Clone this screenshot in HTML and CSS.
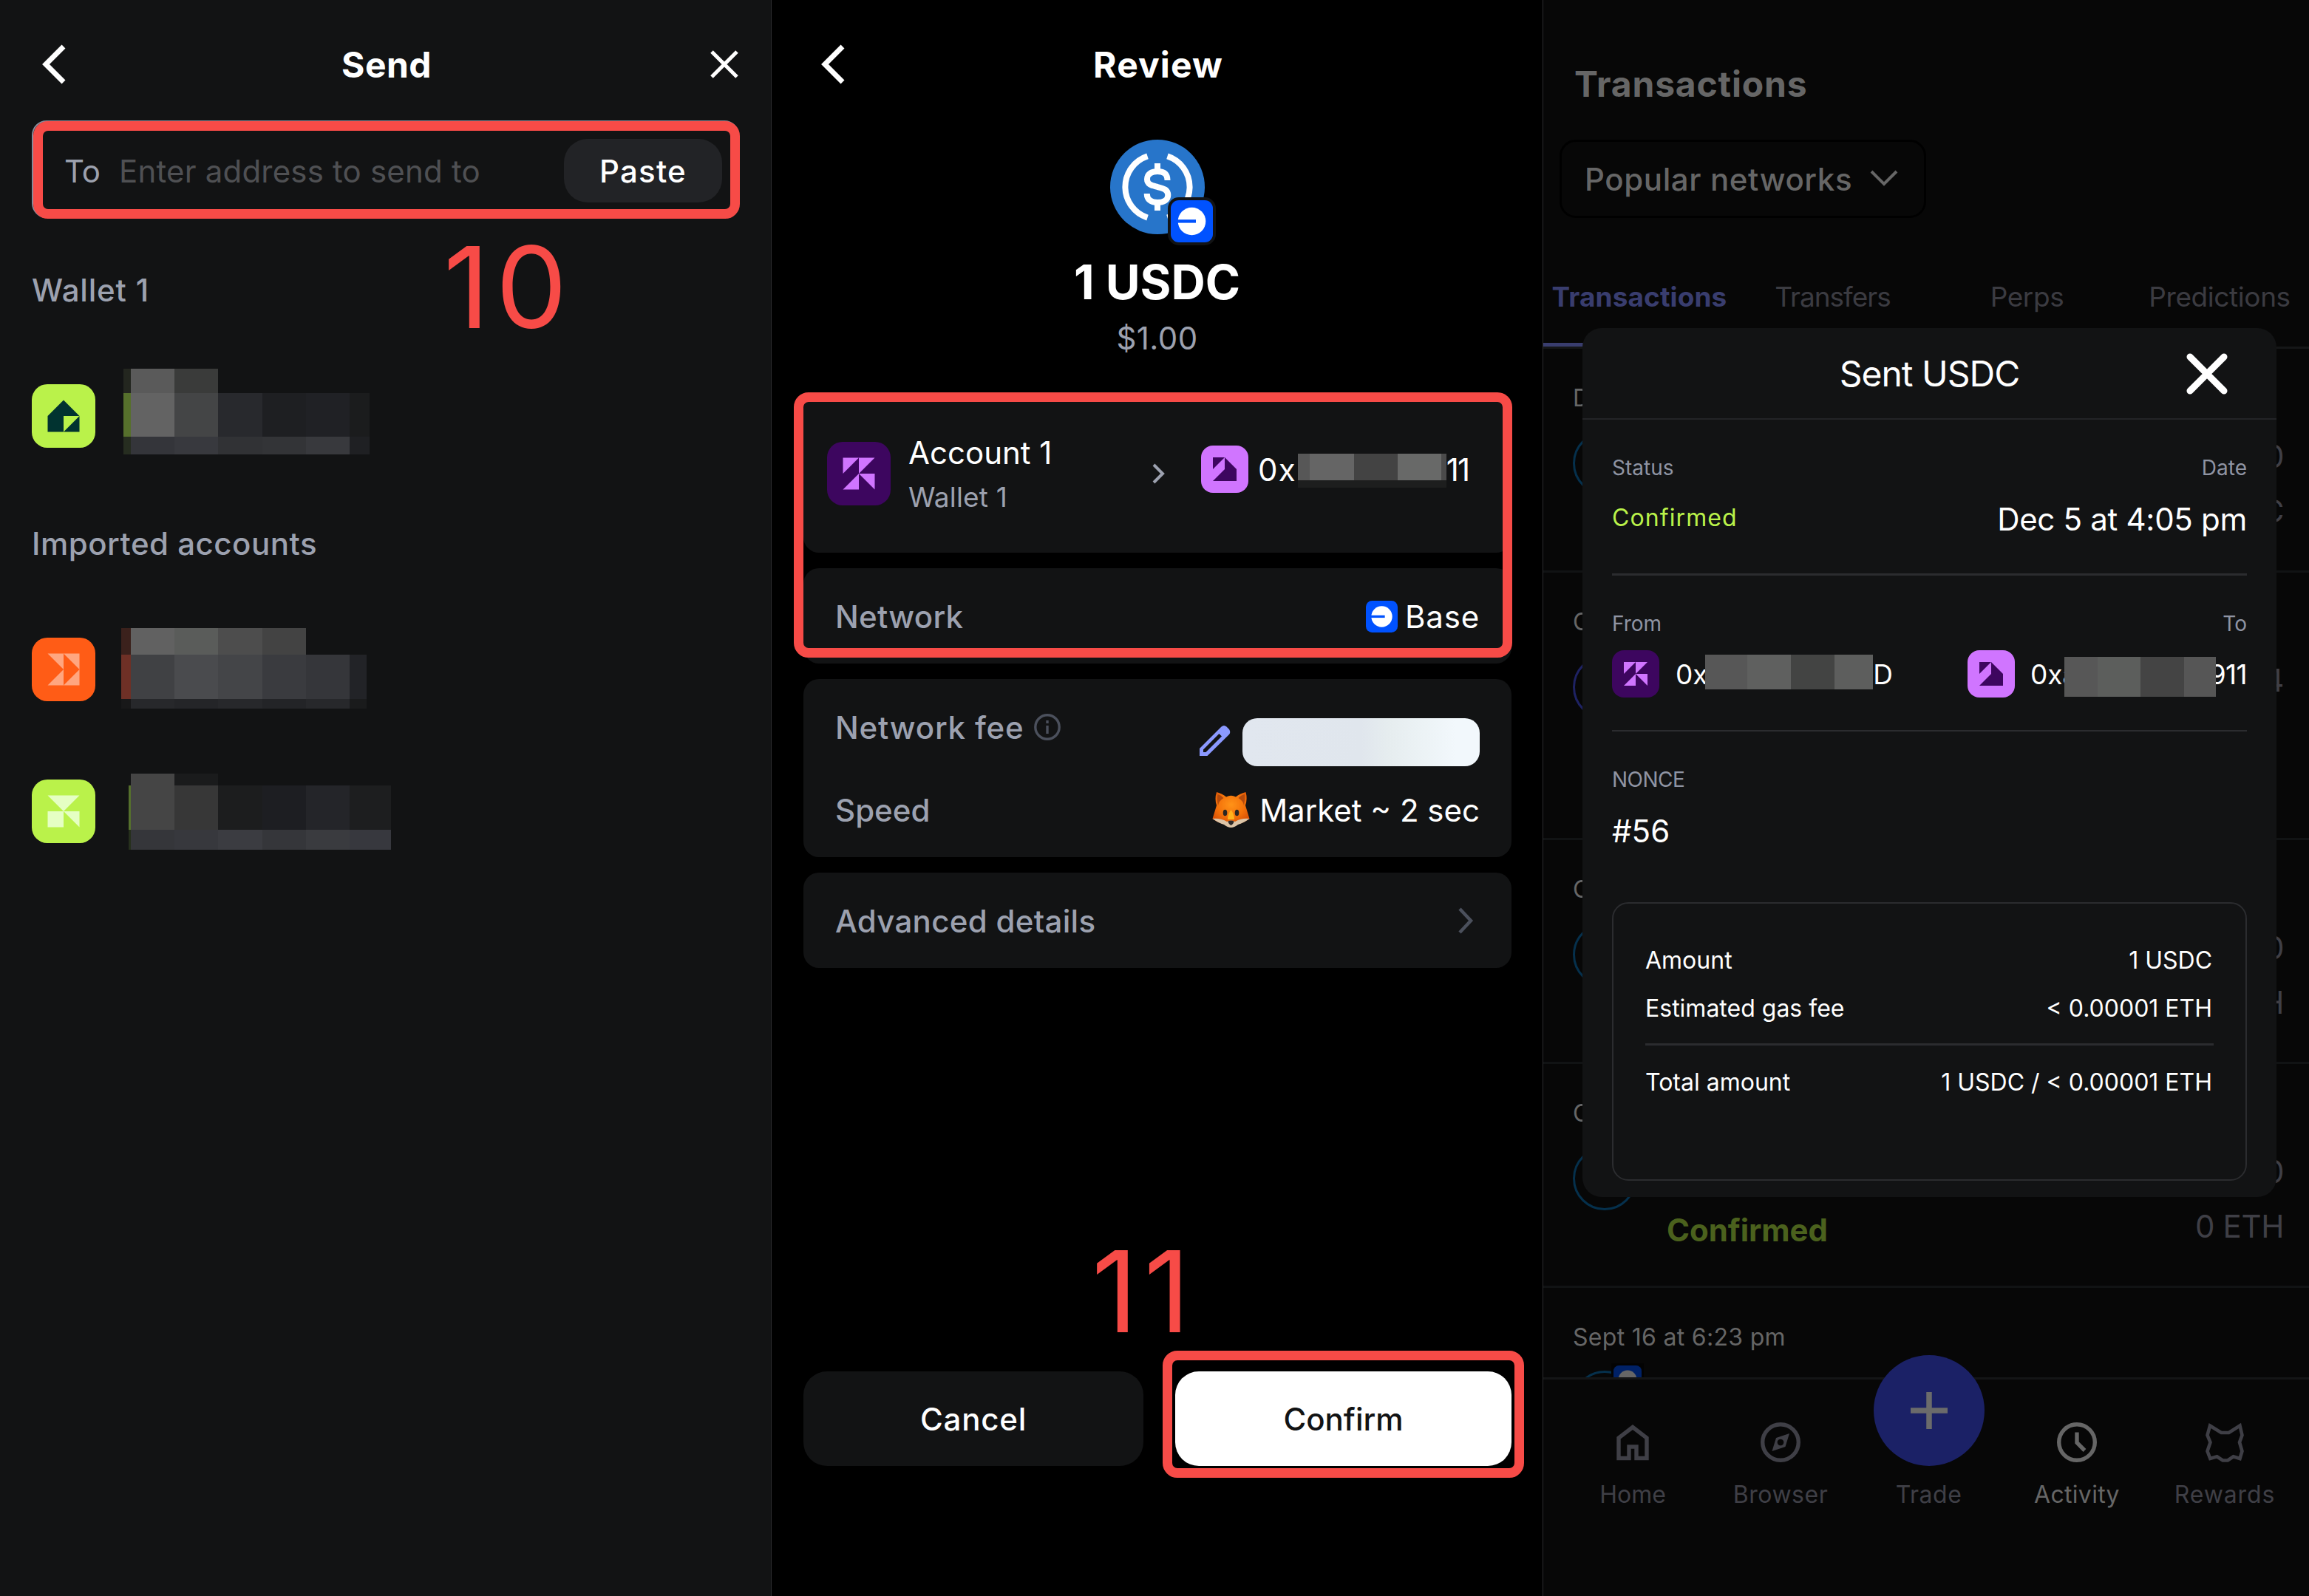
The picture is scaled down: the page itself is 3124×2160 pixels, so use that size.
FILE: index.html
```html
<!DOCTYPE html>
<html lang="en">
<head>
  <meta charset="UTF-8">
  <meta name="viewport" content="width=device-width, initial-scale=1.0">
  <title>Send USDC</title>
  <link rel="stylesheet" href="styles.css">
</head>
<body>
  <svg class="defs" width="0" height="0">
    <symbol id="avatar-k" viewBox="0 0 8 8"><path d="M2 2h2L2 4z M4 2h2L4 4z M4 4v2H2z M4 4h2v2z"/></symbol>
    <symbol id="avatar-tile" viewBox="0 0 8 8"><path d="M2 2h2L2 4z M4 2l2 2v2H2l2-2z"/></symbol>
    <symbol id="avatar-house" viewBox="0 0 8 8"><path d="M4 2L2 4v2h2V4h2z M4 6h2V4z"/></symbol>
    <symbol id="avatar-arrows" viewBox="0 0 8 8"><path d="M2 2h2v2z M4 2h2v2z M4 4v2H2z M6 4v2H4z"/></symbol>
    <symbol id="avatar-mix" viewBox="0 0 8 8"><path d="M2 2h4L4 4z M2 4h2v2H2z M4 4h2v2z"/></symbol>
    <symbol id="base-logo" viewBox="0 0 57 57">
      <rect width="57" height="57" rx="11" fill="#0052ff"/>
      <circle cx="28.5" cy="28.5" r="18.8" fill="#fff"/>
      <rect x="8" y="26.2" width="26" height="4.4" fill="#0052ff"/>
    </symbol>
  </svg>

  <div class="screens">

    <!-- Send -->
    <section class="screen send">
      <header class="topbar">
        <svg class="back" width="32" height="54" viewBox="0 0 32 54"><path d="M29 3L5 27l24 24"/></svg>
        <h1>Send</h1>
        <svg class="close" width="38" height="38" viewBox="0 0 38 38"><path d="M2 2l34 34M36 2L2 36"/></svg>
      </header>

      <div class="to-field">
        <span class="to-label">To</span>
        <span class="placeholder">Enter address to send to</span>
        <button class="paste">Paste</button>
        <div class="mark mark-field"></div>
      </div>

      <h2 class="group-title first">Wallet 1</h2>
      <div class="account-row row-a">
        <svg class="avatar lime" viewBox="0 0 8 8"><use href="#avatar-house"/></svg>
        <svg class="mosaic" width="333" height="116">
          <rect x="0" y="0" width="10" height="33" fill="#23261f"/>
          <rect x="10" y="0" width="59" height="33" fill="#5a5a5a"/>
          <rect x="69" y="0" width="59" height="33" fill="#3a3b3a"/>
          <rect x="0" y="33" width="10" height="59" fill="#56702c"/>
          <rect x="10" y="33" width="59" height="59" fill="#636363"/>
          <rect x="69" y="33" width="59" height="59" fill="#444546"/>
          <rect x="128" y="33" width="60" height="59" fill="#28292d"/>
          <rect x="188" y="33" width="59" height="59" fill="#1e1f22"/>
          <rect x="247" y="33" width="59" height="59" fill="#202125"/>
          <rect x="306" y="33" width="27" height="59" fill="#1b1c1d"/>
          <rect x="0" y="92" width="10" height="24" fill="#262d20"/>
          <rect x="10" y="92" width="59" height="24" fill="#34353a"/>
          <rect x="69" y="92" width="59" height="24" fill="#38393e"/>
          <rect x="128" y="92" width="60" height="24" fill="#313235"/>
          <rect x="188" y="92" width="59" height="24" fill="#333437"/>
          <rect x="247" y="92" width="59" height="24" fill="#38393d"/>
          <rect x="306" y="92" width="27" height="24" fill="#1f2023"/>
        </svg>
      </div>

      <h2 class="group-title imported">Imported accounts</h2>
      <div class="account-row row-b">
        <svg class="avatar orange" viewBox="0 0 8 8"><use href="#avatar-arrows"/></svg>
        <svg class="mosaic" width="332" height="109">
          <rect x="0" y="0" width="13" height="36" fill="#3b211c"/>
          <rect x="13" y="0" width="59" height="36" fill="#616161"/>
          <rect x="72" y="0" width="59" height="36" fill="#5a5c5a"/>
          <rect x="131" y="0" width="60" height="36" fill="#4d4d4d"/>
          <rect x="191" y="0" width="59" height="36" fill="#434343"/>
          <rect x="0" y="36" width="13" height="60" fill="#6e3026"/>
          <rect x="13" y="36" width="59" height="60" fill="#404144"/>
          <rect x="72" y="36" width="59" height="60" fill="#4a4b4e"/>
          <rect x="131" y="36" width="60" height="60" fill="#444548"/>
          <rect x="191" y="36" width="59" height="60" fill="#3a3b3f"/>
          <rect x="250" y="36" width="59" height="60" fill="#35363a"/>
          <rect x="309" y="36" width="23" height="60" fill="#222327"/>
          <rect x="0" y="96" width="13" height="13" fill="#181819"/>
          <rect x="13" y="96" width="59" height="13" fill="#27282b"/>
          <rect x="72" y="96" width="59" height="13" fill="#242528"/>
          <rect x="131" y="96" width="60" height="13" fill="#27282b"/>
          <rect x="191" y="96" width="59" height="13" fill="#232427"/>
          <rect x="250" y="96" width="59" height="13" fill="#27282b"/>
          <rect x="309" y="96" width="23" height="13" fill="#1a1b1c"/>
        </svg>
      </div>
      <div class="account-row row-c">
        <svg class="avatar lime-light" viewBox="0 0 8 8"><use href="#avatar-mix"/></svg>
        <svg class="mosaic" width="355" height="103">
          <rect x="3" y="0" width="59" height="76" fill="#454545"/>
          <rect x="62" y="0" width="59" height="16" fill="#1a1b1c"/>
          <rect x="0" y="16" width="3" height="60" fill="#55702c"/>
          <rect x="62" y="16" width="59" height="60" fill="#373737"/>
          <rect x="121" y="16" width="60" height="60" fill="#1c1d1e"/>
          <rect x="181" y="16" width="59" height="60" fill="#1d1e22"/>
          <rect x="240" y="16" width="59" height="60" fill="#242529"/>
          <rect x="299" y="16" width="56" height="60" fill="#1d1e1f"/>
          <rect x="0" y="76" width="3" height="27" fill="#26301c"/>
          <rect x="3" y="76" width="59" height="27" fill="#35363a"/>
          <rect x="62" y="76" width="59" height="27" fill="#37383d"/>
          <rect x="121" y="76" width="60" height="27" fill="#3b3c41"/>
          <rect x="181" y="76" width="59" height="27" fill="#35363a"/>
          <rect x="240" y="76" width="59" height="27" fill="#3a3b3f"/>
          <rect x="299" y="76" width="56" height="27" fill="#37383e"/>
        </svg>
      </div>
      <div class="step step-10">10</div>
    </section>

    <!-- Review -->
    <section class="screen review">
      <header class="topbar">
        <svg class="back" width="32" height="54" viewBox="0 0 32 54"><path d="M29 3L5 27l24 24"/></svg>
        <h1>Review</h1>
      </header>

      <div class="token">
        <svg width="128" height="128" viewBox="-64 -64 128 128">
          <circle r="64" fill="#2775ca"/>
          <g fill="none" stroke="#fff" stroke-width="8">
            <path d="M-13.5 -41.6A43.8 43.8 0 0 0 -13.5 41.6M13.5 -41.6A43.8 43.8 0 0 1 13.5 41.6"/>
            <path d="M13.5 -9C13.5 -18 8 -21 0 -21C-9 -21 -14 -17 -14 -10.5C-14 -3 -7 -2 0 0C8 2 14.3 3.5 14.3 11C14.3 18 8 21 0 21C-9 21 -14.3 17 -14.3 9M0 -32v11M0 21v11"/>
          </g>
        </svg>
        <svg class="token-badge" width="65" height="65"><use href="#base-logo" x="4" y="4" width="57" height="57"/></svg>
      </div>
      <div class="amount">1 USDC</div>
      <div class="fiat">$1.00</div>

      <div class="cards">
        <div class="card transfer">
          <svg class="avatar purple" viewBox="0 0 8 8"><use href="#avatar-k"/></svg>
          <div class="from">
            <div class="from-name">Account 1</div>
            <div class="from-wallet">Wallet 1</div>
          </div>
          <svg class="arrow" width="18" height="30" viewBox="0 0 18 30"><path d="M3 3l12 12L3 27"/></svg>
          <svg class="avatar small violet" viewBox="0 0 8 8"><use href="#avatar-tile"/></svg>
          <div class="address review-to">
            <span>0x</span>
            <span>11</span>
            <svg class="mask" width="201" height="46">
              <rect width="16" height="36" fill="#575757"/>
              <rect x="16" width="60" height="36" fill="#656565"/>
              <rect x="76" width="59" height="36" fill="#434343"/>
              <rect x="135" width="59" height="36" fill="#686968"/>
              <rect x="194" width="7" height="36" fill="#4b4b4b"/>
              <rect y="36" width="201" height="10" fill="#1d1e1e"/>
            </svg>
          </div>
        </div>

        <div class="card line">
          <span class="label">Network</span>
          <span class="value network"><svg width="43" height="43"><use href="#base-logo" width="43" height="43"/></svg>Base</span>
        </div>

        <div class="card fees">
          <div class="fee-row">
            <span class="label fee-label">Network fee
              <svg width="36" height="36" viewBox="0 0 36 36"><circle cx="18" cy="18" r="16.2"/><path d="M18 16v11M18 9v4"/></svg>
            </span>
            <span class="fee-value">
              <svg width="42" height="42" viewBox="0 0 42 42"><path fill-rule="evenodd" d="M0 41V31L29.5 1.5Q33 -1.5 36.5 1.5L40 5Q42.5 9 40 12L10.5 41ZM5 36V32.5L26.4 11L30 14.5L8.5 36Z"/></svg>
              <span class="skeleton"></span>
            </span>
          </div>
          <div class="speed-row">
            <span class="label speed">Speed</span>
            <span class="value market">
              <svg width="51" height="49" viewBox="0 0 51 49">
                <defs>
                  <radialGradient id="fur" cx=".5" cy=".38" r=".6">
                    <stop offset="0" stop-color="#ff9318"/>
                    <stop offset=".6" stop-color="#f4720a"/>
                    <stop offset="1" stop-color="#d95206"/>
                  </radialGradient>
                </defs>
                <path fill="url(#fur)" d="M6 0Q14 2 19 6.5Q25.5 3 32 6.5Q37 2 45.5 0Q48 9 45 18L50.5 36Q40 44 25.5 45Q11 44 0.5 36L6 18Q3 9 6 0Z"/>
                <path fill="#b34a0c" d="M7.5 3Q12 4 15.5 8Q9 12 8 18Q6 10 7.5 3ZM44 3Q39 4 35.5 8Q42 12 43 18Q45 10 44 3Z"/>
                <path fill="#ffb21c" d="M25.5 24Q30 30 30 37H21Q21 30 25.5 24Z"/>
                <path fill="#dcc5a8" d="M0.5 36Q11 35 20 40Q25.5 37 31 40Q40 35 50.5 36Q42 42 35 44Q30 48 25.5 48Q21 48 16 44Q9 42 0.5 36Z"/>
                <ellipse cx="17.5" cy="28" rx="2.8" ry="4.3" fill="#2b2623"/>
                <ellipse cx="33.5" cy="28" rx="2.8" ry="4.3" fill="#2b2623"/>
                <path fill="#2f2b29" d="M21.5 39.5Q25.5 37.5 29.5 39.5Q29 43 25.5 45Q22 43 21.5 39.5Z"/>
              </svg>Market ~ 2 sec</span>
          </div>
        </div>

        <div class="card line advanced">
          <span class="label">Advanced details</span>
          <svg width="22" height="36" viewBox="0 0 22 36"><path d="M3 2l15 16L3 34"/></svg>
        </div>
      </div>

      <div class="actions">
        <button class="cancel">Cancel</button>
        <button class="confirm">Confirm</button>
      </div>

      <div class="mark mark-transfer"></div>
      <div class="mark mark-confirm"></div>
      <div class="step step-11">11</div>
    </section>

    <!-- Activity -->
    <section class="screen activity">
      <h1 class="page-title">Transactions</h1>
      <div class="network-select">Popular networks
        <svg width="38" height="22" viewBox="0 0 38 22"><path d="M2 2l17 17L36 2"/></svg>
      </div>
      <nav class="tabs">
        <span class="tab active">Transactions</span>
        <span class="tab t-transfers">Transfers</span>
        <span class="tab">Perps</span>
        <span class="tab t-predictions">Predictions</span>
      </nav>

      <div class="list">
        <div class="item">
          <div class="date">D</div>
          <div class="item-body">
            <span class="ring"></span>
            <div class="totals"><span>0</span><span>C</span></div>
          </div>
        </div>
        <div class="item tall">
          <div class="date">O</div>
          <div class="item-body">
            <span class="ring indigo"></span>
            <div class="totals"><span>4</span></div>
          </div>
        </div>
        <div class="item">
          <div class="date">O</div>
          <div class="item-body">
            <span class="ring"></span>
            <div class="totals"><span>0</span><span>H</span></div>
          </div>
        </div>
        <div class="item">
          <div class="date">O</div>
          <div class="item-body">
            <span class="ring"></span>
            <div class="state">Confirmed</div>
            <div class="totals"><span>0</span><span>0 ETH</span></div>
          </div>
        </div>
        <div class="item">
          <div class="date">Sept 16 at 6:23 pm</div>
          <div class="item-body">
            <span class="ring"><svg width="44" height="44"><rect width="44" height="44" fill="#070707"/><use href="#base-logo" x="3" y="3" width="38" height="38"/></svg></span>
          </div>
        </div>
      </div>

      <nav class="bottom-nav">
        <div class="nav-item">
          <svg width="54" height="54" viewBox="0 0 54 54"><path d="M8 48.5V21L27 6.5L46 21v27.5H32V33H22v15.5z"/></svg>
          <span>Home</span>
        </div>
        <div class="nav-item browser">
          <svg width="54" height="54" viewBox="0 0 54 54"><circle cx="27" cy="27" r="24.3"/><path class="solid" fill-rule="evenodd" d="M39 15L33.5 33L15.5 39L21 21ZM27 22.7a4.3 4.3 0 1 0 .01 0z"/></svg>
          <span>Browser</span>
        </div>
        <div class="nav-item trade">
          <div class="trade-button"><svg width="50" height="50" viewBox="0 0 50 50"><path d="M25 0v50M0 25h50"/></svg></div>
          <span>Trade</span>
        </div>
        <div class="nav-item current">
          <svg width="54" height="54" viewBox="0 0 54 54"><circle cx="27" cy="27" r="24.3"/><path d="M27 13.5V27.5L37.5 38"/></svg>
          <span>Activity</span>
        </div>
        <div class="nav-item rewards">
          <svg width="54" height="54" viewBox="0 0 54 54"><path stroke-width="4.6" d="M7 4.5L22.3 14H32.5L47.5 4.5L50.5 17.3L47 27L50.5 39L47.5 49L38.7 46.3L31 51.5H24.3L16.5 46.3L7.3 49L3.5 39L7.5 27L3.5 17.3Z"/></svg>
          <span>Rewards</span>
        </div>
      </nav>

      <div class="modal">
        <header class="modal-head">
          <span></span>
          <h2>Sent USDC</h2>
          <svg width="56" height="56" viewBox="0 0 56 56"><path d="M5 5l46 46M51 5L5 51"/></svg>
        </header>
        <div class="modal-body">
          <div class="pair caption"><span>Status</span><span>Date</span></div>
          <div class="pair values">
            <span class="confirmed">Confirmed</span>
            <span class="when">Dec 5 at 4:05 pm</span>
          </div>
          <hr class="rule-1">
          <div class="pair caption"><span>From</span><span>To</span></div>
          <div class="pair parties">
            <div class="party">
              <svg class="avatar small purple" viewBox="0 0 8 8"><use href="#avatar-k"/></svg>
              <div class="address modal-from">
                <span>0x</span>
                <span>3D</span>
                <svg class="mask" width="227" height="47">
                  <rect width="57" height="47" fill="#575757"/>
                  <rect x="57" width="59" height="47" fill="#5f605f"/>
                  <rect x="116" width="59" height="47" fill="#434443"/>
                  <rect x="175" width="52" height="47" fill="#5d5e5d"/>
                </svg>
              </div>
            </div>
            <div class="party">
              <svg class="avatar small violet" viewBox="0 0 8 8"><use href="#avatar-tile"/></svg>
              <div class="address modal-to">
                <span>0xa</span>
                <span>911</span>
                <svg class="mask" width="205" height="54">
                  <rect width="45" height="54" fill="#575757"/>
                  <rect x="45" width="58" height="54" fill="#5c5e5c"/>
                  <rect x="103" width="59" height="54" fill="#444"/>
                  <rect x="162" width="43" height="54" fill="#565656"/>
                </svg>
              </div>
            </div>
          </div>
          <hr class="rule-2">
          <div class="pair caption nonce-label"><span>NONCE</span></div>
          <div class="nonce">#56</div>
          <div class="summary">
            <div class="pair"><span>Amount</span><span>1 USDC</span></div>
            <div class="pair gas"><span>Estimated gas fee</span><span>&lt; 0.00001 ETH</span></div>
            <hr>
            <div class="pair"><span>Total amount</span><span>1 USDC / &lt; 0.00001 ETH</span></div>
          </div>
        </div>
      </div>
    </section>
  </div>
</body>
</html>
```
FILE: styles.css
```css
* {
  box-sizing: border-box;
}
body {
  margin: 0;
  background-color: #000;
  color: #fff;
  font-family: Inter, "Liberation Sans", sans-serif;
  font-size: 42px;
}
svg {
  display: block;
  flex-shrink: 0;
}
.defs {
  display: none;
}
h1, h2 {
  margin: 0;
}
button {
  border: none;
  padding: 0;
  color: #fff;
  font-family: inherit;
  font-size: 42px;
  font-weight: 500;
}
hr {
  border: none;
  margin: 0;
  height: 3px;
  background-color: #2b2c2f;
}
.screens {
  display: flex;
  width: 3124px;
  height: 2160px;
}
.screen {
  position: relative;
  height: 2160px;
  overflow: hidden;
}
.send {
  width: 1044px;
  background-color: #121314;
  border-right: 1px solid #2c2c2e;
}
.review {
  width: 1044px;
  background-color: #000;
  border-right: 1px solid #2c2c2e;
}
.activity {
  width: 1036px;
  background-color: #070707;
}

/* top bar */
.topbar {
  display: grid;
  grid-template-columns: 1fr auto 1fr;
  align-items: center;
  height: 163px;
  padding: 11px 44px 0 57px;
}
.topbar h1 {
  grid-column: 2;
  padding-top: 1px;
  font-size: 48px;
  line-height: 60px;
  letter-spacing: 0.4px;
}
.topbar svg {
  fill: none;
  stroke: #fff;
}
.topbar .back {
  stroke-width: 7;
}
.topbar .close {
  justify-self: end;
  stroke-width: 5;
}
.send .topbar h1 {
  margin: 0 5px 0 -5px;
}
.review .topbar {
  padding: 11px 64px 0 67px;
}
.review .topbar h1 {
  letter-spacing: 1.1px;
}

/* red marks drawn over the screens */
.mark {
  position: absolute;
  border: 13px solid #f74b47;
  border-radius: 20px;
}
.mark-field {
  top: -1px;
  right: -3px;
  bottom: -3px;
  left: 0;
}
.mark-transfer {
  left: 30px;
  top: 531px;
  width: 972px;
  height: 359px;
}
.mark-confirm {
  left: 529px;
  top: 1828px;
  width: 489px;
  height: 172px;
}
.step {
  position: absolute;
  color: #f74b47;
  font-size: 153px;
  line-height: 160px;
  letter-spacing: 8.5px;
}
.step-10 {
  left: 600px;
  top: 309px;
}
.step-11 {
  left: 433px;
  top: 1668px;
}

/* send */
.to-field {
  position: relative;
  display: flex;
  align-items: center;
  height: 132px;
  margin: 0 43px;
  padding: 4px 21px 0 42px;
  border: 2px solid #858b9a;
  border-radius: 20px;
}
.to-label {
  width: 74px;
  color: #9ca1af;
}
.placeholder {
  flex: 1;
  color: #4f5053;
  letter-spacing: 0.2px;
}
.paste {
  width: 214px;
  height: 86px;
  border-radius: 32px;
  background-color: #222326;
  letter-spacing: 1.2px;
}
.group-title {
  margin-left: 43px;
  color: #9ca1af;
  font-size: 42px;
  font-weight: 500;
  line-height: 60px;
}
.group-title.first {
  margin-top: 68px;
  letter-spacing: 0.8px;
}
.group-title.imported {
  margin-top: 91px;
  letter-spacing: 0.5px;
}
.account-row {
  display: flex;
  align-items: flex-start;
  margin-left: 43px;
}
.row-a {
  margin-top: 76px;
  gap: 38px;
}
.row-a .avatar {
  margin-top: 21px;
}
.row-b {
  margin-top: 84px;
  gap: 35px;
}
.row-b .avatar {
  margin-top: 13px;
}
.row-c {
  margin-top: 88px;
  gap: 45px;
}
.row-c .avatar {
  margin-top: 8px;
}
.avatar {
  width: 86px;
  height: 86px;
  border-radius: 21px;
}
.avatar.small {
  width: 64px;
  height: 64px;
  border-radius: 16px;
}
.lime {
  background-color: #baf24a;
  fill: #013330;
}
.lime-light {
  background-color: #baf24a;
  fill: #e5ffc3;
}
.orange {
  background-color: #ff5c16;
  fill: #ffa680;
}
.purple {
  background-color: #3d065f;
  fill: #d075ff;
}
.violet {
  background-color: #d075ff;
  fill: #3d065f;
}

/* review */
.token {
  position: relative;
  width: 128px;
  margin: 26px auto 0;
}
.token-badge {
  position: absolute;
  left: 78px;
  top: 78px;
  border-radius: 15px;
  background-color: #121314;
}
.amount {
  margin-top: 25px;
  font-size: 64px;
  font-weight: 700;
  line-height: 80px;
  text-align: center;
}
.fiat {
  margin-top: 6px;
  color: #9ca1af;
  line-height: 60px;
  letter-spacing: 0.4px;
  text-align: center;
}
.cards {
  display: flex;
  flex-direction: column;
  gap: 21px;
  margin: 46px 42px 0 43px;
}
.card {
  border-radius: 21px;
  background-color: #121314;
}
.label {
  color: #9ca1af;
  font-weight: 500;
  letter-spacing: 0.3px;
}
.transfer {
  display: flex;
  align-items: center;
  height: 214px;
  padding-left: 32px;
}
.from {
  width: 329px;
  margin: 4px 0 0 24px;
  line-height: 60px;
}
.from-wallet {
  color: #9ca1af;
  font-size: 37px;
  letter-spacing: 0.2px;
}
.arrow {
  margin-right: 49px;
  fill: none;
  stroke: #9ca1af;
  stroke-width: 4;
}
.transfer .small {
  margin-top: -12px;
}
.address {
  position: relative;
  display: flex;
  justify-content: space-between;
}
.mask {
  position: absolute;
}
.review-to {
  width: 285px;
  margin: -10px 0 0 13px;
  line-height: 60px;
  letter-spacing: 1.2px;
}
.review-to .mask {
  left: 54px;
  top: 8px;
}
.review-to span + span {
  letter-spacing: -2px;
}
.line {
  display: flex;
  align-items: center;
  justify-content: space-between;
  height: 129px;
  padding: 1px 43px 0;
}
.network {
  display: flex;
  align-items: center;
  gap: 10px;
  letter-spacing: 0.8px;
}
.fees {
  height: 241px;
  padding: 35px 43px 0 43px;
}
.fee-row {
  display: flex;
  justify-content: space-between;
  height: 113px;
}
.fee-label {
  display: flex;
  align-items: center;
  gap: 14px;
  height: 60px;
  letter-spacing: 0.8px;
}
.fee-label svg {
  margin-top: -1px;
  fill: none;
  stroke: #4b505c;
  stroke-width: 3.4;
}
.fee-value {
  display: flex;
  align-items: center;
  gap: 16px;
  height: 65px;
  margin-top: 18px;
}
.fee-value svg {
  margin-top: -4px;
  fill: #8b99ff;
}
.skeleton {
  width: 321px;
  height: 65px;
  border-radius: 20px;
  background: linear-gradient(90deg, #e1e7ef 0%, #e0e6ed 50%, #e6edef 62%, #f2f8fc 90%);
}
.speed-row {
  display: flex;
  align-items: center;
  justify-content: space-between;
  height: 60px;
  margin-top: -1px;
}
.speed {
  letter-spacing: 0;
}
.market {
  display: flex;
  align-items: center;
  gap: 13px;
}
.advanced svg {
  margin-right: 8px;
  fill: none;
  stroke: #4b505c;
  stroke-width: 4.5;
}
.actions {
  display: flex;
  gap: 43px;
  margin: 546px 42px 0 43px;
}
.actions button {
  height: 128px;
  border-radius: 32px;
}
.cancel {
  width: 460px;
  background-color: #121314;
  letter-spacing: 0.8px;
}
.actions .confirm {
  width: 455px;
  background-color: #fff;
  color: #121314;
}

/* activity, dimmed behind the modal */
.page-title {
  margin-left: 42px;
  padding-top: 74px;
  color: #666;
  font-size: 48px;
  line-height: 80px;
  letter-spacing: 0.8px;
}
.network-select {
  display: flex;
  align-items: center;
  gap: 24px;
  width: 496px;
  height: 106px;
  margin: 35px 0 0 22px;
  padding-left: 31px;
  border: 3px solid #000;
  border-radius: 22px;
  color: #666;
  font-weight: 500;
  letter-spacing: 0.6px;
}
.network-select svg {
  margin-top: -3px;
  fill: none;
  stroke: #666;
  stroke-width: 4;
}
.tabs {
  display: flex;
  height: 140px;
  margin-top: 37px;
  border-bottom: 3px solid #151617;
  color: #3b3b41;
  font-size: 37px;
  line-height: 140px;
  text-align: center;
}
.tab {
  flex-shrink: 0;
  width: 263px;
  height: 137px;
  letter-spacing: -0.4px;
}
.t-transfers {
  letter-spacing: -1px;
}
.t-predictions {
  width: 258px;
}
.tab.active {
  width: 260px;
  border-bottom: 5px solid #393d6e;
  color: #393d6e;
  font-weight: 700;
  letter-spacing: 0.1px;
}
.list {
  height: 1392px;
  overflow: hidden;
}
.item {
  height: 303px;
  padding: 46px 34px 0 40px;
  border-bottom: 3px solid #111314;
}
.item.tall {
  height: 362px;
}
.date {
  height: 40px;
  color: #666;
  font-size: 32px;
  line-height: 42px;
  letter-spacing: 0.3px;
}
.item-body {
  display: flex;
  align-items: flex-start;
  margin-top: 26px;
}
.ring {
  position: relative;
  width: 86px;
  height: 86px;
  border: 3px solid #05304c;
  border-radius: 50%;
}
.ring.indigo {
  border-color: #1e2263;
}
.ring svg {
  position: absolute;
  left: 49px;
  top: -13px;
  filter: brightness(0.4);
}
.state {
  margin: 83px 0 0 41px;
  color: #4b611d;
  font-weight: 700;
  line-height: 60px;
  letter-spacing: -0.1px;
}
.totals {
  display: flex;
  flex-direction: column;
  margin: -3px 0 0 auto;
  color: #3f3f46;
  line-height: 74px;
  letter-spacing: -0.4px;
  text-align: right;
}
.bottom-nav {
  position: relative;
  display: flex;
  height: 296px;
  padding: 0 13px 0 21px;
  border-top: 3px solid #141516;
  background-color: #070707;
}
.nav-item {
  display: flex;
  flex-direction: column;
  align-items: center;
  gap: 24px;
  width: 200px;
  padding-top: 58px;
  color: #3f3f46;
  font-size: 32px;
  line-height: 40px;
}
.nav-item > svg {
  fill: none;
  stroke: currentColor;
  stroke-width: 5.4;
}
.nav-item .solid {
  fill: currentColor;
  stroke: none;
}
.browser {
  letter-spacing: 0.5px;
}
.rewards {
  letter-spacing: 0.9px;
}
.nav-item.current {
  color: #666;
  letter-spacing: 0.3px;
}
.nav-item.trade {
  gap: 19px;
  width: 201px;
  margin-top: -33px;
  padding-top: 0;
  letter-spacing: 0.5px;
}
.trade-button {
  display: flex;
  align-items: center;
  justify-content: center;
  width: 150px;
  height: 150px;
  border-radius: 50%;
  background-color: #1b2166;
}
.trade-button svg {
  stroke: #6b6b6b;
  stroke-width: 7.5;
}

/* modal */
.modal {
  position: absolute;
  left: 53px;
  top: 444px;
  width: 939px;
  height: 1176px;
  border-radius: 26px;
  background-color: #121314;
}
.modal-head {
  display: grid;
  grid-template-columns: 1fr auto 1fr;
  align-items: center;
  height: 124px;
  padding: 1px 66px 0;
  border-bottom: 2px solid #232427;
}
.modal-head h2 {
  font-size: 48px;
  font-weight: 400;
  line-height: 60px;
  letter-spacing: -1px;
}
.modal-head svg {
  justify-self: end;
  stroke: #fff;
  stroke-width: 9;
  stroke-linecap: round;
}
.modal-body {
  padding: 47px 40px 0;
}
.pair {
  display: flex;
  justify-content: space-between;
}
.caption {
  color: #8f94a3;
  font-size: 28px;
  line-height: 36px;
}
.values {
  margin-top: 20px;
  line-height: 60px;
}
.confirmed {
  color: #baf24a;
  font-size: 32px;
  letter-spacing: 1.1px;
}
.when {
  padding-top: 5px;
  line-height: 54px;
  letter-spacing: -0.3px;
}
.rule-1 {
  margin: 45px 0 47px;
}
.parties {
  margin-top: 18px;
  font-size: 37px;
  line-height: 66px;
}
.party {
  display: flex;
}
.address.modal-from {
  width: 294px;
  margin-left: 22px;
}
.modal-from .mask {
  left: 40px;
  top: 6px;
}
.address.modal-to {
  width: 293px;
  margin-left: 21px;
}
.modal-to .mask {
  left: 46px;
  top: 9px;
}
.modal-to span + span {
  letter-spacing: -0.6px;
}
.rule-2 {
  height: 2px;
  margin: 42px 0 47px;
}
.nonce {
  margin-top: 22px;
  line-height: 60px;
}
.nonce-label {
  letter-spacing: -0.5px;
}
.summary {
  height: 377px;
  margin-top: 66px;
  padding: 57px 45px 0 43px;
  border: 2px solid #2b2c2f;
  border-radius: 22px;
  font-size: 32px;
  line-height: 40px;
}
.summary .gas {
  margin-top: 25px;
}
.summary hr {
  margin: 27px -2px 30px 0;
}
```
